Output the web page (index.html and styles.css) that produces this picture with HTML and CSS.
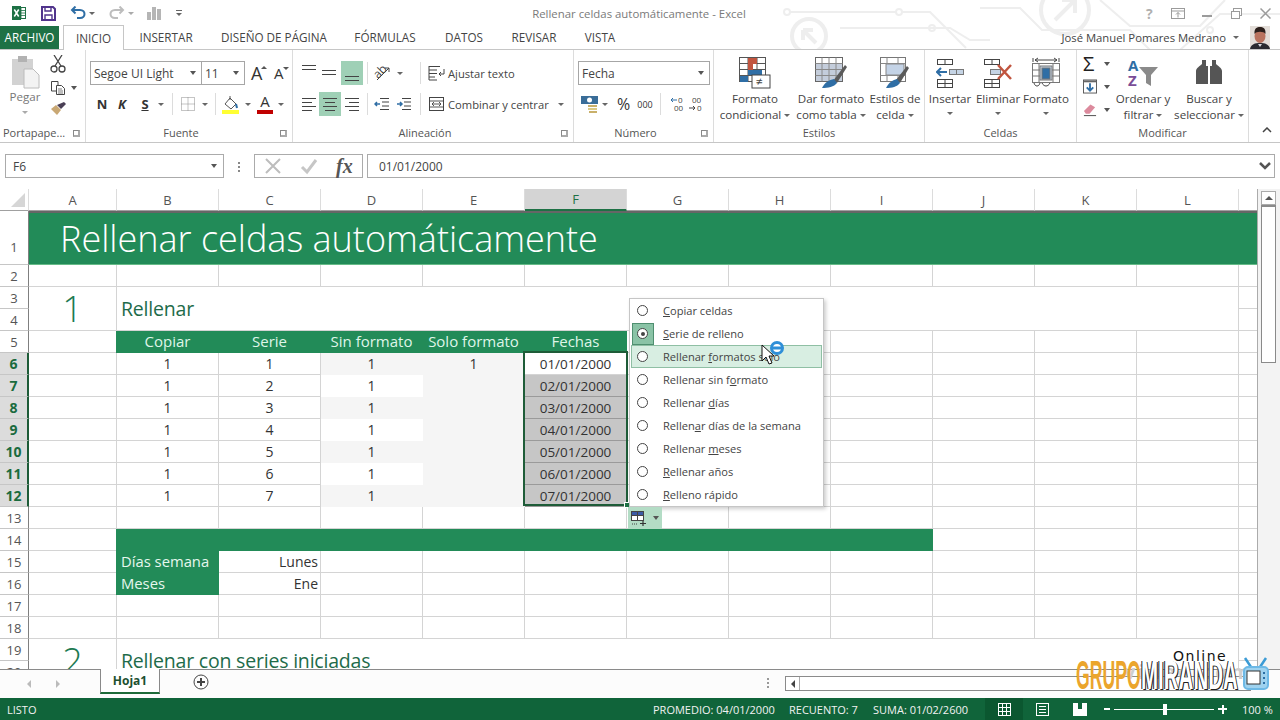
FILE: index.html
```html
<!DOCTYPE html>
<html lang="es">
<head>
<meta charset="utf-8">
<title>Rellenar celdas automáticamente - Excel</title>
<link rel="stylesheet" href="styles.css">
</head>
<body>
<div class="app">
  <div class="chrome">
    <svg class="circuit" width="500" height="50" viewBox="0 0 500 50" fill="none" stroke="#eeeeee" stroke-width="2">
      <circle cx="7" cy="12" r="3"/><path d="M10 12H116"/><circle cx="119" cy="12" r="3"/><path d="M122 12H150L186 48"/>
      <circle cx="29" cy="36" r="17" stroke-width="4"/><path d="M23 30L36 43M23 30V40M23 30H33" stroke-width="4"/>
      <circle cx="285" cy="10" r="24" stroke-width="4"/><path d="M275 20L295 0M295 0H282M295 0V13" stroke-width="4"/>
      <path d="M60 28H170L190 40H210"/><circle cx="152" cy="28" r="3"/>
      <path d="M200 8H240L262 30H350L370 50"/><path d="M320 0L350 26H420L445 0"/><circle cx="430" cy="30" r="3"/>
      <path d="M400 50L440 14H500"/>
    </svg>
    <header class="titlebar">
      <div class="qat">
        <svg width="16" height="16" viewBox="0 0 16 16"><rect x="6.5" y="2.5" width="8" height="11" fill="#fff" stroke="#1e7145"/><path d="M10 3V13M7 5.5H14M7 8H14M7 10.5H14" stroke="#1e7145" stroke-width=".8"/><rect x="1" y="1" width="9" height="14" fill="#1e7145"/><path d="M3.3 4.5L7.7 11.5M7.7 4.5L3.3 11.5" stroke="#fff" stroke-width="1.5"/></svg>
        <svg width="16" height="16" viewBox="0 0 16 16" fill="none" stroke="#51348c" stroke-width="2"><path d="M2 2H13L15 4V15H2Z"/><path d="M5 2V6H11V2" stroke-width="1.4"/><path d="M5 15V10H12V15" stroke-width="1.4"/></svg>
        <span class="qbtn"><svg width="16" height="14" viewBox="0 0 16 14" fill="none" stroke="#2f6ea5" stroke-width="2"><path d="M2 4H10C13 4 14.500 6 14.500 8S13 12 10 12H7"/><path d="M5.500 .5L2 4L5.500 7.500"/></svg><i class="caret"></i></span>
        <span class="qbtn"><svg width="16" height="14" viewBox="0 0 16 14" fill="none" stroke="#bdbdbd" stroke-width="2"><path d="M14 4H6C3 4 1.500 6 1.500 8S3 12 6 12H9"/><path d="M10.500 .5L14 4L10.500 7.500"/></svg><i class="caret pale"></i></span>
        <svg width="14" height="14" viewBox="0 0 14 14" fill="#b5b5b5"><rect x="0" y="6" width="4" height="8"/><rect x="5" y="1" width="4" height="13"/><rect x="10" y="3" width="4" height="11"/></svg>
        <span class="custom"><b></b><i class="caret"></i></span>
      </div>
      <h1 class="doc-title">Rellenar celdas automáticamente - Excel</h1>
      <div class="winctl">
        <span class="help">?</span>
        <svg width="14" height="11" viewBox="0 0 14 11" fill="none" stroke="#9b9b9b"><rect x=".5" y=".5" width="13" height="10"/><path d="M.5 3H13.500M7 9.500V4.500M5 6.500L7 4.500L9 6.500"/></svg>
        <svg width="10" height="11" viewBox="0 0 10 11" stroke="#9b9b9b" stroke-width="2"><path d="M0 8H10"/></svg>
        <svg width="11" height="11" viewBox="0 0 11 11" fill="#fff" stroke="#9b9b9b"><rect x="2.500" y=".5" width="8" height="7"/><rect x=".5" y="3.500" width="8" height="7"/></svg>
        <svg width="11" height="11" viewBox="0 0 11 11" stroke="#9b9b9b" stroke-width="1.500"><path d="M.5 .5L10.500 10.500M10.500 .5L.5 10.500"/></svg>
      </div>
    </header>
    <nav class="tabs">
      <a class="tab file">ARCHIVO</a>
      <a class="tab home">INICIO</a>
      <a class="tab t-ins">INSERTAR</a>
      <a class="tab t-dis">DISEÑO DE PÁGINA</a>
      <a class="tab t-for">FÓRMULAS</a>
      <a class="tab t-dat">DATOS</a>
      <a class="tab t-rev">REVISAR</a>
      <a class="tab t-vis">VISTA</a>
      <div class="user">
        <span>José Manuel Pomares Medrano</span><i class="caret"></i>
        <svg class="avatar" width="20" height="23" viewBox="0 0 20 23"><rect width="20" height="23" fill="#e3ddd8"/><path d="M0 23C1 18 5 17 10 17S19 18 20 23Z" fill="#2a2a30"/><ellipse cx="10" cy="10" rx="5.500" ry="7" fill="#b9735f"/><path d="M4.500 8C4 2 7 1 10 1S16 2 15.500 8C14 5 6 5 4.500 8Z" fill="#2b1f1c"/><path d="M8 18L10 21L12 18Z" fill="#d7d7dd"/></svg>
      </div>
    </nav>
  </div>

  <section class="ribbon">
    <div class="group g-clip">
      <div class="gbody clip">
        <div class="paste">
          <svg width="30" height="34" viewBox="0 0 30 34"><rect x="1" y="4" width="21" height="26" fill="#d2d2d2"/><rect x="7" y="1" width="9" height="6" fill="#b2b2b2"/><path d="M13 14H22L28 20V33H13Z" fill="#f3f3f3" stroke="#bcbcbc"/></svg>
          <span>Pegar</span><i class="caret pale"></i>
        </div>
        <div class="clip-tools">
          <svg width="16" height="18" viewBox="0 0 16 18" fill="none" stroke="#444" stroke-width="1.300"><path d="M4 0L11 11M12 0L5 11"/><circle cx="4" cy="14" r="3"/><circle cx="12" cy="14" r="3"/></svg>
          <span class="row-c"><svg width="16" height="16" viewBox="0 0 16 16" fill="#fff" stroke="#444"><path d="M1.500 1.500H8V11H1.500Z"/><path d="M6.500 5.500H11.500L14.500 8.500V14.500H6.500Z"/><path d="M8 9H12M8 11H13M8 13H13" stroke-width=".7"/></svg><i class="caret dk"></i></span>
          <svg width="16" height="14" viewBox="0 0 16 14"><path d="M1 7L7 13L11 8L6 3Z" fill="#c9a874"/><path d="M7 3L11 7L16 2L14 0Z" fill="#4a3f55"/></svg>
        </div>
      </div>
      <div class="glabel"><span>Portapape...</span><i class="launch"></i></div>
    </div>

    <div class="group g-font">
      <div class="gbody stack">
        <div class="tr-font1">
          <div class="combo"><span>Segoe UI Light</span><i class="caret dk"></i></div>
          <div class="combo"><span>11</span><i class="caret dk"></i></div>
          <span class="grow">A<i class="tri up"></i></span>
          <span class="grow small">A<i class="tri dn"></i></span>
        </div>
        <div class="tr-font2">
          <b class="fb">N</b><b class="fb it">K</b><b class="fb un">S</b><i class="caret"></i>
          <i class="vsep"></i>
          <svg width="14" height="14" viewBox="0 0 14 14" fill="none" stroke="#8a8a8a" stroke-dasharray="1 1"><rect x=".5" y=".5" width="13" height="13"/><path d="M7 .5V13.500M.5 7H13.500"/></svg><i class="caret"></i>
          <i class="vsep"></i>
          <svg width="17" height="19" viewBox="0 0 17 19"><path d="M8 3L14 9L9 14L3 9Z" fill="#fff" stroke="#555"/><path d="M8 1V5" stroke="#555"/><path d="M14 9L15 13" stroke="#2f6ea5" stroke-width="2"/><rect x="0" y="15" width="17" height="4" fill="#ffff33"/></svg><i class="caret"></i>
          <span class="fcolor">A</span><i class="caret"></i>
        </div>
      </div>
      <div class="glabel launchable"><span>Fuente</span><i class="launch"></i></div>
    </div>

    <div class="group g-align">
      <div class="gbody stack">
        <div class="tr-al1">
          <svg width="16" height="22" viewBox="0 0 16 22" stroke="#444"><path d="M1 3.500H15M1 7.500H15"/></svg>
          <svg width="16" height="22" viewBox="0 0 16 22" stroke="#444"><path d="M1 8.500H15M1 12.500H15"/></svg>
          <span class="active"><svg width="16" height="22" viewBox="0 0 16 22" stroke="#444"><path d="M1 14.500H15M1 18.500H15"/></svg></span>
          <i class="vsep"></i>
          <svg width="18" height="18" viewBox="0 0 18 18"><text x="1" y="12" transform="rotate(-45 7 9)" class="svgtxt">ab</text><path d="M4 16L16 4M12 4H16V8" fill="none" stroke="#444"/></svg><i class="caret"></i>
          <i class="vsep"></i>
          <span class="withicon"><svg width="17" height="16" viewBox="0 0 17 16" fill="none" stroke="#444"><path d="M1 1.500H12M1 5H9M1 8.500H9M1 12H7M1 1V15H9"/><path d="M16 4V9H11M13 7L11 9L13 11" stroke-width="1"/></svg>Ajustar texto</span>
        </div>
        <div class="tr-al2">
          <svg width="16" height="22" viewBox="0 0 16 22" stroke="#444"><path d="M1 5.500H15M1 9.500H11M1 13.500H15M1 17.500H11"/></svg>
          <span class="active"><svg width="16" height="22" viewBox="0 0 16 22" stroke="#444"><path d="M1 5.500H15M3 9.500H13M1 13.500H15M3 17.500H13"/></svg></span>
          <svg width="16" height="22" viewBox="0 0 16 22" stroke="#444"><path d="M1 5.500H15M5 9.500H15M1 13.500H15M5 17.500H15"/></svg>
          <i class="vsep"></i>
          <svg width="16" height="14" viewBox="0 0 16 14" fill="none" stroke="#444"><path d="M6 1.500H15M8 5H15M8 9H15M6 12.500H15"/><path d="M6 7H1M3 5L1 7L3 9" stroke="#2f6ea5" stroke-width="1.500"/></svg>
          <svg width="16" height="14" viewBox="0 0 16 14" fill="none" stroke="#444"><path d="M6 1.500H15M8 5H15M8 9H15M6 12.500H15"/><path d="M1 7H6M4 5L6 7L4 9" stroke="#2f6ea5" stroke-width="1.500"/></svg>
          <i class="vsep"></i>
          <span class="withicon"><svg width="17" height="16" viewBox="0 0 17 16" fill="none" stroke="#444"><rect x="1.500" y="1.500" width="14" height="13"/><path d="M1 5H16M1 11H16M4 8H13M6 6L4 8L6 10M11 6L13 8L11 10" stroke-width=".9"/></svg>Combinar y centrar</span><i class="caret"></i>
        </div>
      </div>
      <div class="glabel launchable"><span>Alineación</span><i class="launch"></i></div>
    </div>

    <div class="group g-num">
      <div class="gbody stack">
        <div class="combo fmt"><span>Fecha</span><i class="caret dk"></i></div>
        <div class="tr-num">
          <svg width="18" height="18" viewBox="0 0 18 18"><rect x="0" y="1" width="17" height="8" fill="#3a6d98"/><circle cx="8.500" cy="5" r="2.500" fill="#fff"/><rect x="7" y="10" width="9" height="2" fill="#c9b06a"/><rect x="7" y="13" width="9" height="2" fill="#dcc982"/><rect x="8" y="16" width="8" height="2" fill="#c9b06a"/></svg><i class="caret"></i>
          <span class="pct">%</span><span class="mil">000</span>
          <i class="vsep"></i>
          <svg class="dec1" width="18" height="16" viewBox="0 0 18 16"><text x="9" y="7" class="svgtxt sm">0</text><text x="5" y="15" class="svgtxt sm">00</text><path d="M8 4H2M4 2L2 4L4 6" stroke="#2f6ea5" fill="none"/></svg>
          <svg width="18" height="16" viewBox="0 0 18 16"><text x="5" y="7" class="svgtxt sm">00</text><text x="10" y="15" class="svgtxt sm">0</text><path d="M2 12H8M6 10L8 12L6 14" stroke="#444" fill="none"/></svg>
        </div>
      </div>
      <div class="glabel launchable"><span>Número</span><i class="launch"></i></div>
    </div>

    <div class="group g-styles">
      <div class="gbody bigs">
        <div class="big w-cf">
          <svg width="32" height="32" viewBox="0 0 32 32"><g fill="none" stroke="#555"><rect x=".5" y=".5" width="26" height="24" fill="#fff"/><path d="M.5 6.500H26.500M.5 12.500H26.500M.5 18.500H26.500M9 .5V24.500M18 .5V24.500"/></g><rect x="9" y="1" width="9" height="6" fill="#c1553f"/><rect x="9" y="7" width="5" height="6" fill="#c1553f"/><rect x="9" y="13" width="14" height="5" fill="#2f6ea5"/><rect x="1" y="19" width="8" height="6" fill="#2f6ea5"/><rect x="13" y="18" width="18" height="13" fill="#fff" stroke="#444"/><text x="17" y="29" class="svgtxt">≠</text></svg>
          <span>Formato</span><span>condicional<i class="caret"></i></span>
        </div>
        <div class="big w-tb">
          <svg width="32" height="32" viewBox="0 0 32 32"><rect x=".5" y=".5" width="27" height="24" fill="#fff" stroke="#666"/><rect x="1" y="6" width="26" height="18" fill="#c4cddb"/><path d="M.5 6.500H27.500M.5 12.500H27.500M.5 18.500H27.500M7 .5V24.500M14 .5V24.500M21 .5V24.500" stroke="#8a8a8a" fill="none"/><path d="M18 24L30 8L32 10L22 26Z" fill="#5a5a5a"/><path d="M7 31C10 25 14 23 19 22L22 26C19 30 13 31 7 31Z" fill="#2f6ea5"/></svg>
          <span>Dar formato</span><span>como tabla<i class="caret"></i></span>
        </div>
        <div class="big w-st">
          <svg width="30" height="32" viewBox="0 0 30 32"><rect x=".5" y=".5" width="25" height="24" fill="#fff" stroke="#777"/><path d="M.5 6.500H25.500M.5 18.500H25.500M7 .5V6.500M18 .5V6.500M7 18.500V24.500M18 18.500V24.500" stroke="#888"/><rect x="6" y="7" width="18" height="11" fill="#c4d3e6" stroke="#888"/><path d="M16 23L27 9L29 11L20 26Z" fill="#5a5a5a"/><path d="M6 31C9 25 13 23 17 22L20 26C17 30 12 31 6 31Z" fill="#2f6ea5"/></svg>
          <span>Estilos de</span><span>celda<i class="caret"></i></span>
        </div>
      </div>
      <div class="glabel center"><span>Estilos</span></div>
    </div>

    <div class="group g-cells">
      <div class="gbody bigs">
        <div class="big w-ins">
          <svg width="28" height="30" viewBox="0 0 28 30" fill="none" stroke="#444"><rect x="1.500" y="1.500" width="15" height="5"/><path d="M9 1V7"/><rect x="1.500" y="21.500" width="15" height="8"/><path d="M9 21V30M1 25.500H16"/><path d="M11 14H1M5 10L1 14L5 18" stroke="#2f6ea5" stroke-width="2"/><rect x="13.500" y="11.500" width="14" height="5" fill="#c5d4e5" stroke="#777"/><path d="M20.500 11V17" stroke="#777"/></svg>
          <span>Insertar</span><i class="caret"></i>
        </div>
        <div class="big w-del">
          <svg width="30" height="30" viewBox="0 0 30 30" fill="none" stroke="#444"><rect x="1.500" y="1.500" width="15" height="5"/><path d="M9 1V7"/><rect x="1.500" y="21.500" width="15" height="8"/><path d="M9 21V30M1 25.500H16"/><rect x="7.500" y="11.500" width="10" height="5" fill="#c5d4e5" stroke="#777"/><path d="M15 7L28 21M28 7L15 21" stroke="#c1553f" stroke-width="2.500"/></svg>
          <span>Eliminar</span><i class="caret"></i>
        </div>
        <div class="big w-fmt">
          <svg width="28" height="30" viewBox="0 0 28 30" fill="none" stroke="#777"><rect x=".5" y="5.500" width="27" height="19"/><path d="M7 6V24M21 6V24M.5 12H27.500M.5 18H27.500"/><path d="M1 0V4M27 0V4M3 2H25M6 0L3 2L6 4M22 0L25 2L22 4" stroke="#444"/><rect x="8" y="8" width="12" height="14" fill="#c5d4e5"/><rect x="10" y="10" width="8" height="11" fill="#2f6ea5"/><path d="M2 25C3 29 7 29 8 25M10 25C12 29 16 29 18 25" stroke="#444"/></svg>
          <span>Formato</span><i class="caret"></i>
        </div>
      </div>
      <div class="glabel center"><span>Celdas</span></div>
    </div>

    <div class="group g-edit">
      <div class="gbody bigs">
        <div class="edit-tools">
          <span class="row-e"><span class="sigma">Σ</span><i class="caret dk"></i></span>
          <span class="row-e"><svg width="15" height="15" viewBox="0 0 15 15"><rect x=".5" y=".5" width="14" height="14" fill="#fff" stroke="#555"/><rect x="1" y="1" width="13" height="2" fill="#666"/><path d="M7.500 4V12M4 8.500L7.500 12L11 8.500" fill="none" stroke="#2f6ea5" stroke-width="2"/></svg><i class="caret dk"></i></span>
          <span class="row-e"><svg width="15" height="14" viewBox="0 0 15 14"><path d="M1 8L8 1L13 4L7 11H3Z" fill="#dc8a9d"/><path d="M1 13H14" stroke="#444"/></svg><i class="caret dk"></i></span>
        </div>
        <div class="big w-sort">
          <svg class="sort-i" width="32" height="30" viewBox="0 0 32 30"><text x="1" y="13" class="svgtxt az-a">A</text><text x="1" y="28" class="svgtxt az-z">Z</text><path d="M12 9H31L24 17V28L19 25V17Z" fill="#8a8a8a"/></svg>
          <span>Ordenar y</span><span>filtrar<i class="caret"></i></span>
        </div>
        <div class="big w-find">
          <svg width="28" height="30" viewBox="0 0 28 30" fill="#555"><path d="M7 2H11V8H13V26H1V13C1 10 5 8 7 6ZM21 2H17V8H15V26H27V13C27 10 23 8 21 6Z"/></svg>
          <span>Buscar y</span><span>seleccionar<i class="caret"></i></span>
        </div>
      </div>
      <div class="glabel center"><span>Modificar</span></div>
    </div>

    <div class="collapse"><svg width="10" height="6" viewBox="0 0 10 6" fill="none" stroke="#444" stroke-width="1.500"><path d="M1 5L5 1L9 5"/></svg></div>
  </section>

  <section class="formula">
    <div class="namebox"><span>F6</span><i class="caret dk"></i></div>
    <div class="dots"></div>
    <div class="fx-tools">
      <svg width="18" height="18" viewBox="0 0 18 18" stroke="#bdbdbd" stroke-width="2"><path d="M2 2L16 16M16 2L2 16"/></svg>
      <svg width="18" height="18" viewBox="0 0 18 18" fill="none" stroke="#c6c6c6" stroke-width="3"><path d="M2 10L7 15L16 3"/></svg>
      <span class="fx">fx</span>
    </div>
    <div class="fbar"><span>01/01/2000</span><svg width="12" height="8" viewBox="0 0 12 8" fill="none" stroke="#555" stroke-width="2.500"><path d="M1 1L6 6L11 1"/></svg></div>
  </section>

  <section class="workarea">
    <div class="sheet">
      <table class="grid">
        <colgroup><col class="c-rh"><col class="c-a"><col span="11" class="c-n"><col class="c-m"></colgroup>
        <thead>
          <tr><th class="corner"><i></i></th><th>A</th><th>B</th><th>C</th><th>D</th><th>E</th><th class="selh">F</th><th>G</th><th>H</th><th>I</th><th>J</th><th>K</th><th>L</th><th></th></tr>
        </thead>
        <tbody>
          <tr class="r1"><th>1</th><td colspan="13" class="banner"><span>Rellenar celdas automáticamente</span></td></tr>
          <tr><th>2</th><td></td><td></td><td></td><td></td><td></td><td></td><td></td><td></td><td></td><td></td><td></td><td></td><td></td></tr>
          <tr><th>3</th><td rowspan="2" class="bignum">1</td><td rowspan="2" colspan="11" class="heading">Rellenar</td><td></td></tr>
          <tr><th>4</th><td></td></tr>
          <tr><th>5</th><td></td><td class="hd">Copiar</td><td class="hd">Serie</td><td class="hd">Sin formato</td><td class="hd">Solo formato</td><td class="hd">Fechas</td><td></td><td></td><td></td><td></td><td></td><td></td><td></td></tr>
          <tr><th class="selr">6</th><td></td><td class="n">1</td><td class="n">1</td><td class="n b1">1</td><td class="n b2">1</td><td class="n date first">01/01/2000</td><td></td><td></td><td></td><td></td><td></td><td></td><td></td></tr>
          <tr><th class="selr">7</th><td></td><td class="n">1</td><td class="n">2</td><td class="n b3">1</td><td class="b2"></td><td class="n date fill">02/01/2000</td><td></td><td></td><td></td><td></td><td></td><td></td><td></td></tr>
          <tr><th class="selr">8</th><td></td><td class="n">1</td><td class="n">3</td><td class="n b1">1</td><td class="b2"></td><td class="n date fill">03/01/2000</td><td></td><td></td><td></td><td></td><td></td><td></td><td></td></tr>
          <tr><th class="selr">9</th><td></td><td class="n">1</td><td class="n">4</td><td class="n b3">1</td><td class="b2"></td><td class="n date fill">04/01/2000</td><td></td><td></td><td></td><td></td><td></td><td></td><td></td></tr>
          <tr><th class="selr">10</th><td></td><td class="n">1</td><td class="n">5</td><td class="n b1">1</td><td class="b2"></td><td class="n date fill">05/01/2000</td><td></td><td></td><td></td><td></td><td></td><td></td><td></td></tr>
          <tr><th class="selr">11</th><td></td><td class="n">1</td><td class="n">6</td><td class="n b3">1</td><td class="b2"></td><td class="n date fill">06/01/2000</td><td></td><td></td><td></td><td></td><td></td><td></td><td></td></tr>
          <tr><th class="selr">12</th><td></td><td class="n">1</td><td class="n">7</td><td class="n b1">1</td><td class="b2"></td><td class="n date fill">07/01/2000</td><td></td><td></td><td></td><td></td><td></td><td></td><td></td></tr>
          <tr><th>13</th><td></td><td></td><td></td><td></td><td></td><td></td><td></td><td></td><td></td><td></td><td></td><td></td><td></td></tr>
          <tr><th>14</th><td></td><td colspan="8" class="hd"></td><td></td><td></td><td></td><td></td></tr>
          <tr><th>15</th><td></td><td class="lb">Días semana</td><td class="rt">Lunes</td><td></td><td></td><td></td><td></td><td></td><td></td><td></td><td></td><td></td><td></td></tr>
          <tr><th>16</th><td></td><td class="lb">Meses</td><td class="rt">Ene</td><td></td><td></td><td></td><td></td><td></td><td></td><td></td><td></td><td></td><td></td></tr>
          <tr><th>17</th><td></td><td></td><td></td><td></td><td></td><td></td><td></td><td></td><td></td><td></td><td></td><td></td><td></td></tr>
          <tr><th>18</th><td></td><td></td><td></td><td></td><td></td><td></td><td></td><td></td><td></td><td></td><td></td><td></td><td></td></tr>
          <tr><th>19</th><td rowspan="2" class="bignum">2</td><td rowspan="2" colspan="11" class="heading">Rellenar con series iniciadas</td><td></td></tr>
          <tr><th>20</th><td></td></tr>
        </tbody>
      </table>

      <div class="selection"><i></i></div>

      <ul class="menu">
        <li><i class="radio"></i><span><u>C</u>opiar celdas</span></li>
        <li class="checked"><i class="radio on"></i><span><u>S</u>erie de relleno</span></li>
        <li class="hover"><i class="radio"></i><span>Rellenar <u>f</u>ormatos sólo</span></li>
        <li><i class="radio"></i><span>Rellenar sin f<u>o</u>rmato</span></li>
        <li><i class="radio"></i><span>Rellenar <u>d</u>ías</span></li>
        <li><i class="radio"></i><span>Rellen<u>a</u>r días de la semana</span></li>
        <li><i class="radio"></i><span>Rellenar <u>m</u>eses</span></li>
        <li><i class="radio"></i><span><u>R</u>ellenar años</span></li>
        <li><i class="radio"></i><span><u>R</u>elleno rápido</span></li>
      </ul>
      <div class="smarttag">
        <svg width="16" height="15" viewBox="0 0 16 15"><rect x=".5" y=".5" width="12" height="4" fill="#3b5aa5" stroke="#444"/><rect x=".5" y="4.500" width="12" height="5" fill="#fff" stroke="#444"/><path d="M6.500 0V10" stroke="#444"/><path d="M1 13H6" stroke="#444" stroke-dasharray="1 1"/><path d="M9 12.500H15M12 10V15" stroke="#333" stroke-width="1.200"/></svg>
        <i class="caret dk"></i>
      </div>
      <svg class="pointer" width="34" height="26" viewBox="0 0 34 26"><circle cx="24" cy="7" r="5.500" fill="#fff" stroke="#2f8fd8" stroke-width="3"/><rect x="20" y="5.500" width="8" height="3" fill="#2f8fd8"/><path d="M9 4V20L13 16L16 23L19 22L16 15H21Z" fill="#fff" stroke="#111"/></svg>
    </div>
    <aside class="vscroll">
      <div class="vbtn"><i class="tri up dk2"></i></div>
      <div class="vthumb"></div>
    </aside>
  </section>

  <section class="tabbar">
    <div class="nav"><i class="arr l"></i><i class="arr r"></i></div>
    <div class="sheet-tab">Hoja1</div>
    <div class="add"><svg width="16" height="16" viewBox="0 0 16 16" fill="none" stroke="#444"><circle cx="8" cy="8" r="7"/><path d="M4 8H12M8 4V12" stroke-width="2"/></svg></div>
    <div class="grip"></div>
    <div class="hscroll"><div class="hbtn"><i class="arr l dk"></i></div></div>
    <div class="logo">
      <span class="wm">video.com</span>
      <span class="online">Online</span>
      <span class="grupo">GRUPO</span><span class="miranda">MIRANDA</span>
      <svg width="28" height="36" viewBox="0 0 28 36" fill="none"><path d="M9 11L3 2M18 11L24 2" stroke="#3b9bd5" stroke-width="2.500"/><rect x="2" y="11" width="24" height="22" rx="4" fill="#9ed2ef" stroke="#6db9e6" stroke-width="2"/><rect x="5" y="15" width="13" height="13" fill="#fff" stroke="#333"/><path d="M22 16V18M22 21V23M22 26V28" stroke="#2a6ea5" stroke-width="2"/></svg>
    </div>
  </section>

  <footer class="status">
    <span class="ready">LISTO</span>
    <span class="st st1">PROMEDIO: 04/01/2000</span>
    <span class="st st2">RECUENTO: 7</span>
    <span class="st st3">SUMA: 01/02/2600</span>
    <span class="view on"><svg width="13" height="13" viewBox="0 0 13 13" fill="none" stroke="#fff"><rect x=".5" y=".5" width="12" height="12"/><path d="M4.500 0V13M8.500 0V13M0 4.500H13M0 8.500H13"/></svg></span>
    <span class="view"><svg width="13" height="13" viewBox="0 0 13 13" fill="none" stroke="#fff"><rect x=".5" y=".5" width="12" height="12"/><path d="M3 3.500H10M3 6.500H10M3 9.500H10"/></svg></span>
    <span class="view"><svg width="14" height="13" viewBox="0 0 14 13" fill="#fff"><path d="M0 0H5V6H9V0H14V13H0Z"/></svg></span>
    <span class="zoom"><b class="minus"></b><span class="track"><i></i></span><b class="plus"></b></span>
    <span class="pctz">100 %</span>
  </footer>
</div>
</body>
</html>
```

FILE: styles.css
```css
* { box-sizing: border-box; }
html, body { margin: 0; padding: 0; }
body { width: 1280px; height: 720px; overflow: hidden; background: #fff; font-family: "Open Sans", "Noto Sans", sans-serif; color: #444; }
.app { width: 1280px; height: 720px; display: flex; flex-direction: column; }
i { font-style: normal; }

.caret { display: inline-block; width: 0; height: 0; border-left: 3px solid transparent; border-right: 3px solid transparent; border-top: 3px solid #666; flex: none; }
.caret.pale { border-top-color: #aaa; }
.caret.dk { border-left-width: 3.5px; border-right-width: 3.5px; border-top: 4px solid #555; }

.chrome { position: relative; height: 50px; }
.circuit { position: absolute; left: 780px; top: 0; }

.titlebar { position: relative; height: 26px; display: flex; align-items: center; }
.qat { width: 190px; display: flex; align-items: center; padding-left: 11px; gap: 13px; flex: none; height: 22px; }
.qbtn { display: flex; align-items: center; gap: 3px; margin-left: 1px; }
.custom { display: flex; flex-direction: column; gap: 2px; align-items: center; margin-left: 2px; }
.custom b { width: 6px; height: 1px; background: #666; }
.doc-title { position: absolute; left: 0; width: 1278px; margin: 0; text-align: center; font-size: 11.400px; font-weight: 400; color: #7a7a7a; }
.winctl { margin-left: auto; height: 26px; display: flex; align-items: center; padding-right: 9px; position: relative; }
.winctl > :nth-child(2) { margin-left: 15px; }
.winctl > :nth-child(3) { margin-left: 17px; }
.winctl > :nth-child(4) { margin-left: 19px; }
.winctl > :nth-child(5) { margin-left: 18px; }
.help { font-size: 14px; font-weight: 700; color: #b0b0b0; width: 10px; }

.tabs { position: relative; height: 24px; display: flex; align-items: stretch; border-bottom: 1px solid #c6c6c6; font-size: 11.700px; }
.tab { display: flex; align-items: center; justify-content: center; color: #444; padding-bottom: 1px; }
.tab.file { width: 59px; background: #1e7145; color: #fff; margin-right: 4px; }
.tab.home { width: 61px; background: #fff; border: 1px solid #c6c6c6; border-bottom: 0; height: 25px; color: #444; margin-top: -1px; z-index: 1; }
.t-ins { width: 84px; }
.t-dis { width: 132px; }
.t-for { width: 90px; }
.t-dat { width: 68px; }
.t-rev { width: 72px; }
.t-vis { width: 60px; }
.user { margin-left: auto; display: flex; align-items: center; padding-right: 10px; gap: 7px; color: #444; font-size: 11.300px; }
.user .avatar { margin-left: 4px; }

.ribbon { height: 93px; display: flex; border-bottom: 1px solid #c6c6c6; font-size: 11.600px; color: #444; position: relative; }
.group { display: flex; flex-direction: column; padding-top: 4px; border-right: 1px solid #dcdcdc; flex: none; }
.gbody { height: 71px; }
.glabel { height: 15px; display: flex; align-items: center; justify-content: center; font-size: 11px; position: relative; color: #555; }
.glabel.launchable { padding-right: 16px; }
.launch { position: absolute; right: 5px; top: 5px; width: 7px; height: 7px; border-left: 1px solid #888; border-top: 1px solid #888; border-bottom: 2px solid #aaa; border-right: 2px solid #aaa; }
.g-clip { width: 86px; }
.g-font { width: 207px; }
.g-align { width: 281px; }
.g-num { width: 140px; }
.g-styles { width: 211px; }
.g-cells { width: 152px; }
.g-edit { width: 172px; }
.g-clip .glabel { justify-content: flex-start; padding-left: 3px; }
.collapse { margin-left: 13px; align-self: flex-end; padding-bottom: 6px; }

.clip { display: flex; }
.paste { width: 50px; display: flex; flex-direction: column; align-items: center; color: #777; padding-top: 1px; }
.paste svg { margin-left: 1px; }
.paste span { margin-top: 0; line-height: 16px; }
.paste .caret { margin-top: 6px; }
.clip-tools { display: flex; flex-direction: column; justify-content: space-between; height: 62px; padding-top: 1px; }
.row-c { display: flex; align-items: center; gap: 5px; }

.stack { display: flex; flex-direction: column; padding-top: 7px; }
.combo { height: 24px; border: 1px solid #a6a6a6; display: flex; align-items: center; justify-content: space-between; padding: 0 5px 0 3px; background: #fff; font-size: 12px; }
.tr-font1 { display: grid; grid-template-columns: 112px 43px 20px 22px; margin-left: 4px; align-items: center; height: 24px; }
.tr-font1 .combo + .combo { margin-left: -1px; }
.grow { font-size: 18px; position: relative; margin-left: 6px; line-height: 1; color: #333; justify-self: start; }
.grow.small { font-size: 15px; margin-left: 9px; }
.tri { position: absolute; width: 0; height: 0; border-left: 3px solid transparent; border-right: 3px solid transparent; }
.tri.up { border-bottom: 3px solid #555; right: -5px; top: 2px; }
.tri.dn { border-top: 3px solid #555; right: -5px; top: 1px; }
.tr-font2 { display: grid; grid-template-columns: 18px 22px 24px 15px 1px 29px 13px 1px 29px 7px 26px 7px; align-items: center; margin: 7px 0 0 7px; height: 24px; justify-items: center; }
.fb { font-size: 13px; color: #333; font-weight: 700; }
.fb.it { font-style: italic; }
.fb.un { text-decoration: underline; }
.vsep { width: 1px; height: 22px; background: #dcdcdc; display: block; justify-self: end; }
.tr-font2 .caret, .tr-al1 .caret, .tr-al2 .caret, .tr-num .caret { justify-self: start; }
.tr-font2 > .caret:nth-child(4) { margin-left: 1px; }
.fcolor { font-size: 15px; line-height: 15px; border-bottom: 4px solid #c00000; width: 16px; text-align: center; color: #333; font-weight: 400; height: 20px; display: block; }

.active { width: 22px; height: 24px; background: #9fd0b6; display: flex; align-items: center; justify-content: center; }
.withicon { display: flex; align-items: center; gap: 3px; white-space: nowrap; font-size: 11.200px; justify-self: start; margin-left: 7px; }
.tr-al1 { display: grid; grid-template-columns: 17px 24px 22px 5px 28px 24px 1px auto; height: 24px; align-items: center; margin-left: 7px; justify-items: center; }
.tr-al2 { display: grid; grid-template-columns: 17px 26px 18px 7px 27px 18px 8px 132px auto; margin: 7px 0 0 7px; height: 24px; align-items: center; justify-items: center; }
.tr-al2 .caret { margin-left: 5px; }
.tr-al1 .caret { margin-left: 1px; }
.svgtxt { font-family: "Open Sans", sans-serif; font-size: 12px; fill: #444; }
.svgtxt.sm { font-size: 8px; }
.svgtxt.az-a { font-size: 15px; fill: #2f6ea5; font-weight: 700; }
.svgtxt.az-z { font-size: 15px; fill: #7a4d97; font-weight: 700; }

.combo.fmt { width: 132px; margin-left: 4px; height: 24px; }
.tr-num { display: grid; grid-template-columns: 18px 16px 17px 26px 3px 26px 18px; align-items: center; margin: 7px 0 0 7px; height: 24px; }
.tr-num .caret { margin-left: 3px; }
.dec1 { justify-self: end; }
.pct { font-size: 16px; color: #333; text-align: center; }
.mil { font-size: 9px; color: #333; text-align: center; }

.bigs { display: flex; }
.big { display: flex; flex-direction: column; align-items: center; line-height: 16px; white-space: nowrap; padding-top: 3px; flex: none; }
.big svg { height: 32px; margin-bottom: 2px; }
.big .caret { margin-left: 3px; vertical-align: middle; }
.big > .caret { margin: 5px 0 0; }
.w-cf { width: 82px; }
.w-tb { width: 70px; }
.w-st { width: 58px; }
.w-ins { width: 48px; margin-left: 1px; }
.w-del { width: 48px; }
.w-fmt { width: 48px; }
.edit-tools { width: 33px; flex: none; display: flex; flex-direction: column; padding: 2px 0 0 6px; gap: 8px; }
.row-e { display: flex; align-items: center; gap: 7px; height: 15px; }
.sigma { font-size: 20px; line-height: 15px; color: #222; width: 15px; }
.w-sort { width: 66px; }
.w-find { width: 66px; }

.formula { height: 46px; display: flex; padding: 11px 5px 11px 5px; align-items: stretch; }
.namebox { width: 219px; border: 1px solid #ababab; display: flex; align-items: center; justify-content: space-between; padding: 0 6px 0 7px; font-size: 12px; }
.dots { width: 30px; position: relative; }
.dots::after { content: ""; position: absolute; left: 14px; top: 8px; width: 2px; height: 2px; background: #888; box-shadow: 0 4px #888, 0 8px #888; }
.fx-tools { width: 109px; border: 1px solid #ababab; display: flex; align-items: center; padding-left: 9px; gap: 18px; }
.fx { font-family: "Liberation Serif", serif; font-style: italic; font-weight: 700; font-size: 20px; color: #555; }
.fbar { margin-left: 4px; flex: 1; border: 1px solid #ababab; display: flex; align-items: center; justify-content: space-between; padding: 0 3px 0 11px; font-size: 12px; color: #444; }

.workarea { height: 480px; display: flex; }
.sheet { position: relative; width: 1258px; height: 480px; overflow: hidden; border-right: 1px solid #ababab; }
.grid { border-collapse: separate; border-spacing: 0; table-layout: fixed; width: 1258px; font-size: 13px; color: #333; font-weight: 400; }
.c-rh { width: 29px; }
.c-a { width: 88px; }
.c-n { width: 102px; }
.c-m { width: 19px; }
.grid th { font-weight: 400; font-size: 13px; color: #555; padding: 0; border-right: 1px solid #7f7f7f; border-bottom: 1px solid #c6c6c6; height: 22px; line-height: 20px; }
.grid thead th { height: 20px; border-right: 1px solid #dcdcdc; border-bottom: 1px solid #a0a0a0; font-size: 13px; }
.grid thead th.selh { background: #d4d4d4; border-bottom: 2px solid #1e7145; color: #1e7145; }
.corner { position: relative; }
.corner i { position: absolute; right: 3px; bottom: 3px; width: 0; height: 0; border-left: 14px solid transparent; border-bottom: 14px solid #d6d6d6; }
.grid td { height: 22px; padding: 0; border-right: 1px solid #d4d4d4; border-bottom: 1px solid #d4d4d4; overflow: hidden; white-space: nowrap; }
.grid th.selr { background: #dcdcdc; color: #1a6b3e; font-weight: 700; font-size: 14px; border-right: 2px solid #1e5c38; }
.r1 th, .r1 td { height: 54px; }
.r1 th { padding-top: 18px; }
.grid td.banner { background: #228b58; border: 0; border-top: 2px solid #666; border-bottom: 1px solid #6b8; color: #fff; font-size: 36px; font-weight: 300; padding-left: 31px; line-height: 48px; }
.banner span { display: block; }
.grid td.bignum { color: #1e7a52; font-size: 36px; font-weight: 300; text-align: center; line-height: 40px; }
.grid td.heading { color: #1e6b4a; font-size: 19.500px; font-weight: 400; padding-left: 4px; line-height: 20px; letter-spacing: -.2px; }
.grid td.hd { background: #228b58; color: #dff5e8; border-color: #228b58; text-align: center; font-size: 15px; font-weight: 400; padding-bottom: 1px; box-shadow: -1px 0 0 #228b58; }
.grid td.n { text-align: center; font-size: 14px; }
.grid td.date { font-size: 13.500px; font-weight: 400; color: #333; }
.grid td.b1 { background: #f5f5f5; border-color: #f5f5f5; }
.grid td.b2 { background: #f5f5f5; border-color: #f5f5f5; }
.grid td.b3 { background: #fff; border-color: #fff; }
.grid td.fill { background: #c6c6c6; border-bottom-color: #9a9a9a; }
.grid td.lb { background: #228b58; color: #e6f7ee; border-color: #228b58; font-size: 14.800px; font-weight: 400; padding: 0 0 1px 4px; box-shadow: -1px 0 0 #228b58; }
.grid td.rt { text-align: right; padding-right: 2px; font-size: 14px; }

.selection { position: absolute; left: 523px; top: 162px; width: 105px; height: 155px; border: 2px solid #1e5c38; pointer-events: none; }
.selection i { position: absolute; right: -4px; bottom: -4px; width: 6px; height: 6px; background: #1e7145; border: 1px solid #fff; }

.menu { position: absolute; left: 629px; top: 109px; width: 195px; height: 209px; margin: 0; padding: 0 1px; list-style: none; background: #fff; border: 1px solid #c6c6c6; box-shadow: 2px 2px 4px rgba(0,0,0,.2); font-size: 11.100px; color: #444; }
.menu li { height: 23px; display: flex; align-items: center; position: relative; padding-left: 6px; }
.menu li span { margin-left: 15px; white-space: nowrap; }
.radio { width: 11px; height: 11px; border: 1px solid #444; border-radius: 50%; display: block; flex: none; position: relative; background: #fff; }
.radio.on::after { content: ""; position: absolute; left: 2.500px; top: 2.500px; width: 4px; height: 4px; background: #444; border-radius: 50%; }
.menu li.checked::before { content: ""; position: absolute; left: 1px; top: 1px; width: 20px; height: 20px; background: #8ac3a6; border: 1px solid #4f8f70; }
.menu li.hover { background: #d8eee2; box-shadow: inset 0 0 0 1px #8fbfa4; }
.smarttag { position: absolute; left: 628px; top: 318px; width: 34px; height: 22px; background: #b3dcc5; display: flex; align-items: center; padding-left: 3px; gap: 6px; }
.pointer { position: absolute; left: 753px; top: 152px; }

.vscroll { width: 22px; height: 480px; background: #f3f3f3; padding: 2px 3px 0 3px; }
.vbtn { height: 14px; width: 15px; background: #fff; border: 1px solid #ababab; position: relative; }
.tri.dk2 { left: 3px; top: 4px; right: auto; border-left-width: 4px; border-right-width: 4px; border-bottom: 4px solid #555; }
.vthumb { height: 158px; width: 15px; background: #fff; border: 1px solid #8a8a8a; border-top: 2px solid #8a8a8a; }

.tabbar { position: relative; height: 29px; display: flex; border-top: 1px solid #8a8a8a; background: #fcfcfc; font-size: 12px; }
.nav { width: 100px; display: flex; align-items: center; padding-left: 27px; gap: 25px; }
.arr { width: 0; height: 0; border-top: 4px solid transparent; border-bottom: 4px solid transparent; display: block; }
.arr.l { border-right: 4px solid #bbb; }
.arr.r { border-left: 4px solid #bbb; }
.arr.dk { border-right-color: #444; }
.sheet-tab { width: 60px; height: 25px; background: #fff; border: 1px solid #8a8a8a; border-top: 0; border-bottom: 2px solid #1e6b39; display: flex; align-items: center; justify-content: center; font-weight: 700; color: #1d4f30; margin-top: -1px; }
.add { margin-left: 33px; display: flex; align-items: center; height: 24px; }
.grip { position: absolute; left: 767px; top: 8px; width: 2px; height: 2px; background: #999; box-shadow: 0 4px #999, 0 8px #999; }
.hscroll { position: absolute; left: 785px; top: 6px; width: 466px; height: 15px; border: 1px solid #8a8a8a; background: #fff; }
.hbtn { width: 14px; height: 13px; border-right: 1px solid #ababab; display: flex; align-items: center; justify-content: center; }

.logo { position: absolute; left: 1076px; top: -14px; width: 204px; height: 44px; }
.logo > * { position: absolute; }
.logo svg { left: 166px; top: 0; }
.wm { left: 48px; top: 2px; font-size: 20px; color: #cfcfcf; font-weight: 700; white-space: nowrap; letter-spacing: 3px; }
.online { left: 97px; top: -8px; font-size: 14px; color: #111; letter-spacing: 1.500px; font-family: "DejaVu Sans", sans-serif; }
.grupo, .miranda { top: 4px; font-family: "Liberation Sans", sans-serif; font-weight: 700; font-size: 41px; line-height: 30px; transform-origin: left center; white-space: nowrap; }
.grupo { left: 0; color: #eba52c; transform: scaleX(.43); }
.miranda { left: 65px; color: #fff; transform: scaleX(.5); text-shadow: 2px 1px 0 #222, -2px 0 0 #222; }

.status { height: 22px; background: #10643a; color: #f2f2f2; font-size: 11px; display: flex; align-items: center; position: relative; }
.status > * { flex: none; }
.ready { margin-left: 7px; width: 646px; }
.st { white-space: nowrap; }
.st1 { width: 136px; }
.st2 { width: 84px; }
.st3 { width: 112px; }
.view { width: 38px; height: 22px; display: flex; align-items: center; justify-content: center; }
.view.on { background: #0b5730; }
.zoom { display: flex; align-items: center; margin-left: 5px; gap: 4px; }
.minus { width: 6px; height: 2px; background: #fff; display: block; }
.plus { width: 9px; height: 9px; display: block; background: linear-gradient(#fff,#fff) center/9px 2px no-repeat, linear-gradient(#fff,#fff) center/2px 9px no-repeat; }
.track { width: 100px; height: 1px; background: #fff; position: relative; display: block; }
.track i { position: absolute; left: 49px; top: -5px; width: 4px; height: 11px; background: #fff; display: block; }
.pctz { margin-left: 15px; white-space: nowrap; }
```
